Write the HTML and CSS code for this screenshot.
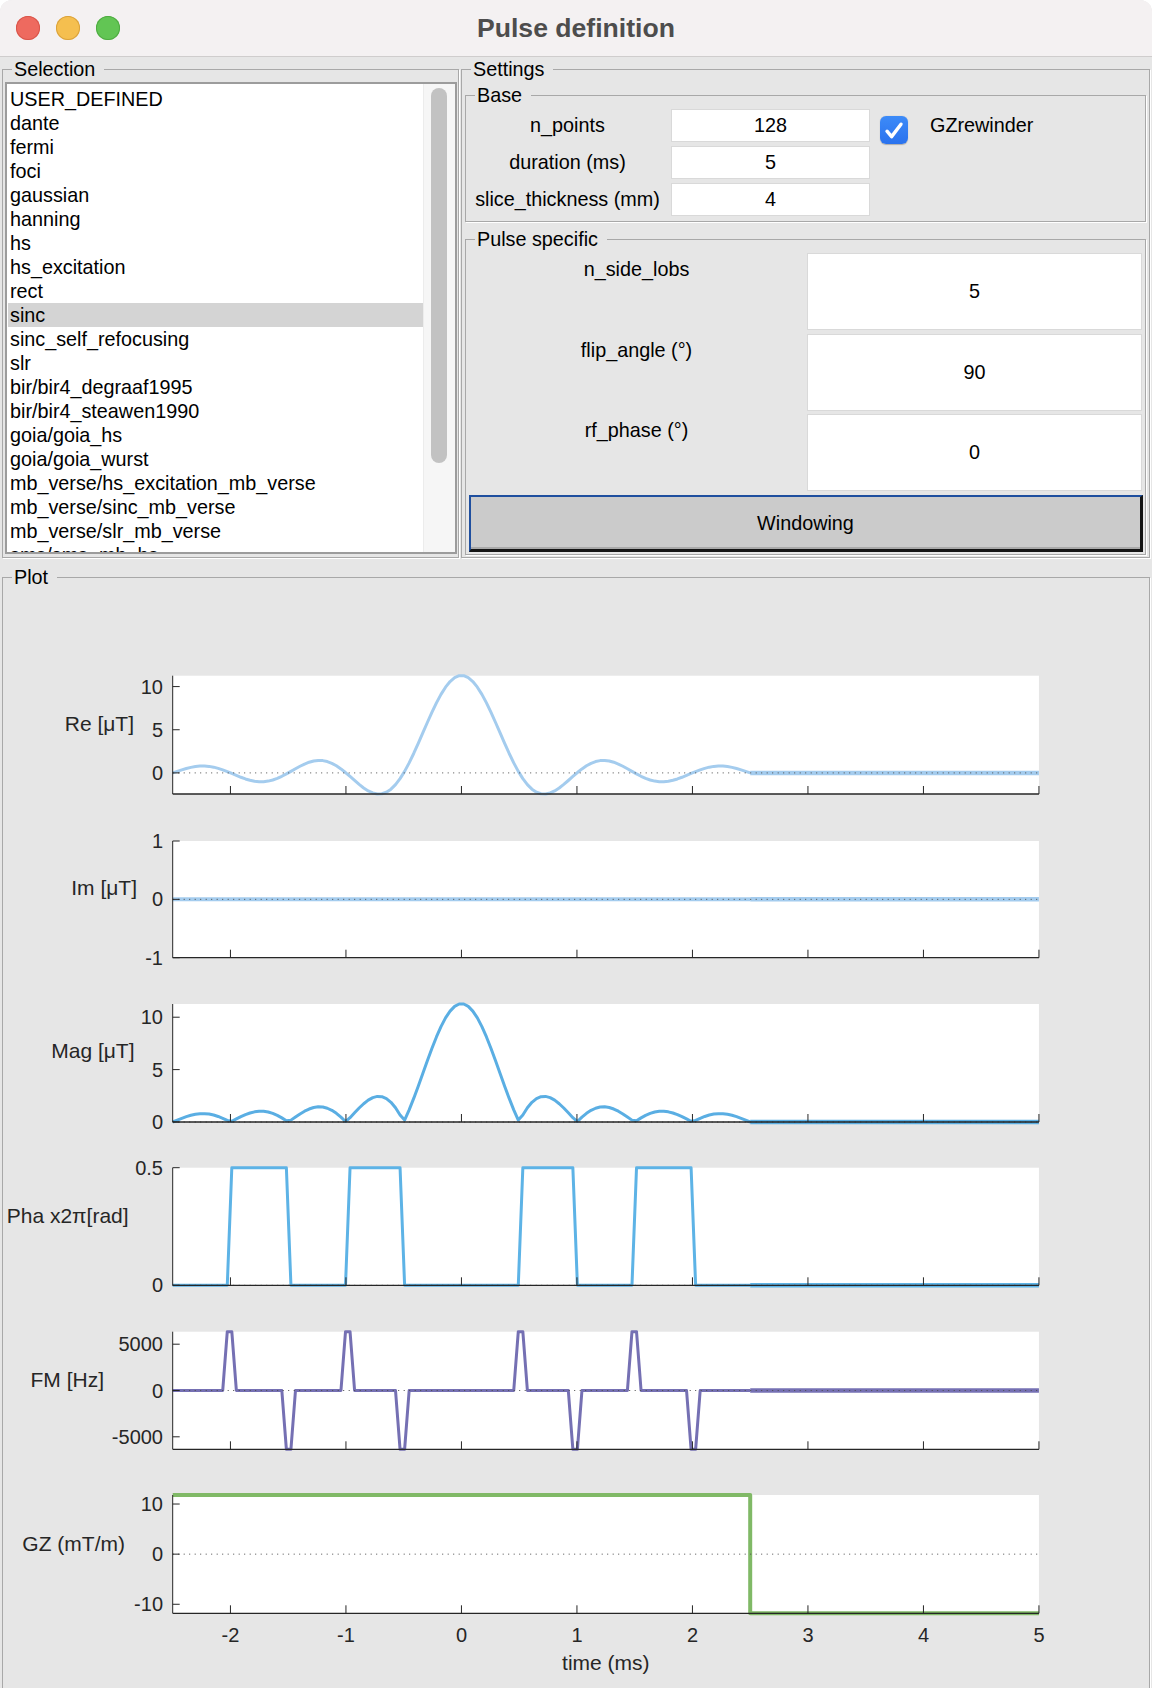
FILE: index.html
```html
<!DOCTYPE html>
<html lang="en">
<head>
<meta charset="utf-8">
<title>Pulse definition</title>
<link rel="stylesheet" href="styles.css">
</head>
<body>
<div class="window">
  <header class="titlebar">
    <div class="lights">
      <span class="light red"></span><span class="light yellow"></span><span class="light green"></span>
    </div>
    <h1 class="title">Pulse definition</h1>
    <div class="spacer"></div>
  </header>
  <main class="content">
    <div class="top">
      <fieldset class="panel selection">
        <legend>Selection</legend>
        <div class="listbox">
          <ul class="items">
            <li>USER_DEFINED</li>
            <li>dante</li>
            <li>fermi</li>
            <li>foci</li>
            <li>gaussian</li>
            <li>hanning</li>
            <li>hs</li>
            <li>hs_excitation</li>
            <li>rect</li>
            <li class="sel">sinc</li>
            <li>sinc_self_refocusing</li>
            <li>slr</li>
            <li>bir/bir4_degraaf1995</li>
            <li>bir/bir4_steawen1990</li>
            <li>goia/goia_hs</li>
            <li>goia/goia_wurst</li>
            <li>mb_verse/hs_excitation_mb_verse</li>
            <li>mb_verse/sinc_mb_verse</li>
            <li>mb_verse/slr_mb_verse</li>
            <li>sms/sms_mb_hs</li>
          </ul>
          <div class="scrollbar"><div class="thumb"></div></div>
        </div>
      </fieldset>
      <fieldset class="panel settings">
        <legend>Settings</legend>
        <fieldset class="panel base">
          <legend>Base</legend>
          <div class="base-grid">
            <span class="label">n_points</span>
            <span class="edit">128</span>
            <span class="check"><svg width="28" height="28" viewBox="0 0 28 28"><path d="M7 15.2 L11.6 20.6 L21 8.2" fill="none" stroke="#fff" stroke-width="3.4" stroke-linecap="round" stroke-linejoin="round"/></svg></span>
            <span class="check-label">GZrewinder</span>
            <span class="label">duration (ms)</span>
            <span class="edit">5</span>
            <span class="label">slice_thickness (mm)</span>
            <span class="edit">4</span>
          </div>
        </fieldset>
        <fieldset class="panel specific">
          <legend>Pulse specific</legend>
          <div class="spec-grid">
            <span class="spec-label">n_side_lobs</span>
            <span class="edit">5</span>
            <span class="spec-label">flip_angle (°)</span>
            <span class="edit">90</span>
            <span class="spec-label">rf_phase (°)</span>
            <span class="edit">0</span>
          </div>
          <button class="btn" type="button">Windowing</button>
        </fieldset>
      </fieldset>
    </div>
    <fieldset class="panel plot">
      <legend>Plot</legend>
      <svg id="plots" class="plots" width="1146" height="1100" viewBox="3 588 1146 1100"></svg>
    </fieldset>
  </main>
</div>
<script src="plot.js"></script>
</body>
</html>
```

FILE: styles.css
```css
* { box-sizing: border-box; }
html, body { margin: 0; padding: 0; }
body {
  width: 1152px;
  height: 1688px;
  overflow: hidden;
  background: #ffffff;
  font-family: "Liberation Sans", Arial, Helvetica, sans-serif;
  font-size: 19.8px;
  color: #000;
}
.window {
  width: 1152px;
  height: 1688px;
  background: #e6e6e6;
  border-radius: 12px 12px 0 0;
  overflow: hidden;
  display: flex;
  flex-direction: column;
}
.titlebar {
  flex: none;
  height: 57px;
  padding-bottom: 1px;
  background: #f4f1f2;
  border-bottom: 1px solid #cfcdcd;
  display: grid;
  grid-template-columns: 1fr auto 1fr;
  align-items: center;
}
.lights { display: flex; gap: 16px; padding-left: 16px; }
.light { width: 24px; height: 24px; border-radius: 50%; }
.red { background: #ee6a5f; box-shadow: inset 0 0 0 1px #d8564b; }
.yellow { background: #f5bf4f; box-shadow: inset 0 0 0 1px #daa23c; }
.green { background: #62c554; box-shadow: inset 0 0 0 1px #4fab42; }
.title {
  margin: 0;
  font-size: 26.6px;
  font-weight: 700;
  color: #4d4d4d;
  line-height: 30px;
}
.content { flex: 1; display: flex; flex-direction: column; }

.panel {
  margin: 0;
  padding: 0;
  min-width: 0;
  border: 1px solid #a8a8a8;
  box-shadow: 1px 1px 0 #ffffff;
}
.panel > legend {
  margin-left: 9px;
  padding: 0 9px 0 2px;
  font-size: 19.8px;
  line-height: 22px;
}

.top { display: flex; gap: 2px; padding: 1px 2px 0 2px; }
.selection { width: 457px; flex: none; }
.settings { width: 689px; flex: none; }

.listbox {
  margin: 2px 1px 2px 2px;
  height: 472px;
  border: 2px solid #9c9c9c;
  background: #ffffff;
  display: flex;
}
.items {
  flex: 1;
  margin: 0;
  padding: 3px 0 0 1px;
  list-style: none;
  overflow: hidden;
}
.items li {
  height: 24px;
  line-height: 24px;
  padding-left: 2px;
  white-space: nowrap;
}
.items li.sel { background: #d4d4d4; }
.scrollbar {
  flex: none;
  width: 32px;
  background: #f6f6f6;
  border-left: 1px solid #ececec;
  padding: 4px 0 0 7px;
}
.thumb { width: 16px; height: 375px; border-radius: 8px; background: #c2c2c2; }

.base { margin: 4px 3px 0 3px; }
.base-grid {
  display: grid;
  grid-template-columns: 205px 209px 50px 1fr;
  grid-auto-rows: 33px;
  row-gap: 4px;
  padding: 3px 0 5px 0;
  align-items: center;
}
.label { grid-column: 1; text-align: center; padding-right: 2px; white-space: nowrap; }
.base-grid .edit { grid-column: 2; width: 199px; height: 33px; }
.check {
  grid-column: 3;
  grid-row: 1;
  align-self: start;
  margin-top: 7px;
  width: 28px;
  height: 28px;
  border-radius: 6px;
  background: linear-gradient(#3d8bf8, #2a72ee);
  box-shadow: 0 0.5px 1px rgba(0, 0, 0, 0.25);
  display: flex;
}
.check-label { grid-column: 4; grid-row: 1; }

.edit {
  background: #ffffff;
  border: 1px solid #d9d9d9;
  display: flex;
  align-items: center;
  justify-content: center;
}

.specific { margin: 6px 3px 2px 3px; }
.spec-grid {
  display: grid;
  grid-template-columns: 341px 335px;
  grid-auto-rows: 77px;
  row-gap: 3.5px;
  padding-top: 3px;
}
.spec-label {
  grid-column: 1;
  align-self: start;
  padding-top: 5px;
  line-height: 22px;
  text-align: center;
}
.spec-grid .edit { grid-column: 2; }
.btn {
  display: flex;
  align-items: center;
  justify-content: center;
  width: calc(100% - 5px);
  height: 57px;
  margin: 4px 2px 2px 3px;
  padding: 0;
  background: #cbcbcb;
  border-style: solid;
  border-width: 2px 3px 3px 2px;
  border-color: #1f4f9f #141414 #141414 #1f4f9f;
  box-shadow: inset 0 -2px 0 #a9a9a9;
  font: inherit;
  color: #000;
}

.plot { margin: 8px 2px 0 2px; height: 1130px; flex: none; }
.plots { display: block; }
.plots .tick { font-family: "Liberation Sans", Arial, Helvetica, sans-serif; font-size: 20px; fill: #262626; }
.plots .ylabel { font-family: "Liberation Sans", Arial, Helvetica, sans-serif; font-size: 21px; fill: #262626; }
```

FILE: plot.js
```js
(function () {
  var NS = 'http://www.w3.org/2000/svg';
  var svg = document.getElementById('plots');
  var X0 = 172.7, XS = 115.5;
  function X(t) { return X0 + (t + 2.5) * XS; }
  var XR = X(5);

  function add(name, attrs, text) {
    var e = document.createElementNS(NS, name);
    for (var k in attrs) e.setAttribute(k, attrs[k]);
    if (text != null) e.textContent = text;
    svg.appendChild(e);
    return e;
  }

  var N = 128, dt = 5 / (N - 1), A = 11.29;
  var t = [], re = [], mag = [], ph = [], fm = [], zeros = [];
  var k;
  for (k = 0; k < N; k++) {
    var tk = -2.5 + k * dt, x = 2 * tk;
    var v = Math.abs(x) < 1e-9 ? A : A * Math.sin(Math.PI * x) / (Math.PI * x);
    t.push(tk); re.push(v); mag.push(Math.abs(v)); ph.push(v < -1e-6 ? 0.5 : 0); zeros.push(0);
  }
  for (k = 0; k < N; k++) {
    var a = ph[Math.max(k - 1, 0)], b = ph[Math.min(k + 1, N - 1)];
    var d = (k === 0 || k === N - 1) ? dt : 2 * dt;
    fm.push((b - a) / (d * 1e-3));
  }
  var reMin = Math.min.apply(null, re), reMax = Math.max.apply(null, re);
  var fmMax = Math.max.apply(null, fm.map(function (q) { return Math.abs(q); }));

  var panels = [
    { top: 675.7, bot: 794, lo: reMin, hi: reMax, ticks: [0, 5, 10], label: 'Re [\u03bcT]', lx: 134, ly: 723, data: re, color: '#a4ccee', w: 3 },
    { top: 841, bot: 957.7, lo: -1, hi: 1, ticks: [-1, 0, 1], label: 'Im [\u03bcT]', lx: 137, ly: 887, data: zeros, color: '#a4ccee', w: 4 },
    { top: 1004, bot: 1122, lo: 0, hi: reMax, ticks: [0, 5, 10], label: 'Mag [\u03bcT]', lx: 134.5, ly: 1050, data: mag, color: '#5aaee3', w: 3 },
    { top: 1167.7, bot: 1285.3, lo: 0, hi: 0.5, ticks: [0, 0.5], label: 'Pha x2\u03c0[rad]', lx: 128.6, ly: 1215, data: ph, color: '#5db3e6', w: 3 },
    { top: 1331.7, bot: 1449.3, lo: -fmMax, hi: fmMax, ticks: [-5000, 0, 5000], label: 'FM [Hz]', lx: 104, ly: 1379, data: fm, color: '#7570b3', w: 3 },
    { top: 1495, bot: 1613.3, lo: -11.8, hi: 11.8, ticks: [-10, 0, 10], label: 'GZ (mT/m)', lx: 125, ly: 1543, gz: true, color: '#80b966', w: 4 }
  ];

  panels.forEach(function (p, i) {
    function Y(val) { return p.bot - (val - p.lo) / (p.hi - p.lo) * (p.bot - p.top); }
    add('rect', { x: X0, y: p.top, width: XR - X0, height: p.bot - p.top, fill: '#ffffff' });

    var style = function (w) {
      return { fill: 'none', stroke: p.color, 'stroke-width': w, 'stroke-linejoin': 'round', 'stroke-linecap': 'butt' };
    };
    if (p.gz) {
      var g = style(p.w);
      g.d = 'M' + X0 + ',' + Y(11.8) + 'L' + X(2.5) + ',' + Y(11.8) + 'L' + X(2.5) + ',' + Y(-11.8) + 'L' + XR + ',' + Y(-11.8);
      add('path', g);
    } else {
      var pts = [];
      for (var j = 0; j < N; j++) pts.push(X(t[j]).toFixed(2) + ',' + Y(p.data[j]).toFixed(2));
      var s = style(p.w);
      s.d = 'M' + pts.join('L');
      add('path', s);
      var f = style(4.5);
      f.d = 'M' + X(2.5) + ',' + Y(0) + 'L' + XR + ',' + Y(0);
      add('path', f);
    }

    add('line', { x1: X0, y1: Y(0), x2: XR, y2: Y(0), stroke: '#4a4a4a', 'stroke-width': 1, 'stroke-dasharray': '1 4.5' });

    add('line', { x1: X0, y1: p.top, x2: X0, y2: p.bot, stroke: '#262626', 'stroke-width': 1 });
    add('line', { x1: X0, y1: p.bot, x2: XR, y2: p.bot, stroke: '#262626', 'stroke-width': 1.3 });
    for (var s2 = -2; s2 <= 5; s2++) {
      add('line', { x1: X(s2), y1: p.bot, x2: X(s2), y2: p.bot - 8, stroke: '#262626', 'stroke-width': 1 });
    }
    p.ticks.forEach(function (tv) {
      add('line', { x1: X0, y1: Y(tv), x2: X0 + 7, y2: Y(tv), stroke: '#262626', 'stroke-width': 1 });
      add('text', { x: 163, y: Y(tv), 'text-anchor': 'end', 'dominant-baseline': 'central', 'class': 'tick' }, String(tv));
    });
    add('text', { x: p.lx, y: p.ly, 'text-anchor': 'end', 'dominant-baseline': 'central', 'class': 'ylabel' }, p.label);

    if (i === panels.length - 1) {
      for (var s3 = -2; s3 <= 5; s3++) {
        add('text', { x: X(s3), y: 1635, 'text-anchor': 'middle', 'dominant-baseline': 'central', 'class': 'tick' }, String(s3));
      }
      add('text', { x: (X0 + XR) / 2, y: 1662, 'text-anchor': 'middle', 'dominant-baseline': 'central', 'class': 'ylabel' }, 'time (ms)');
    }
  });
})();
```
